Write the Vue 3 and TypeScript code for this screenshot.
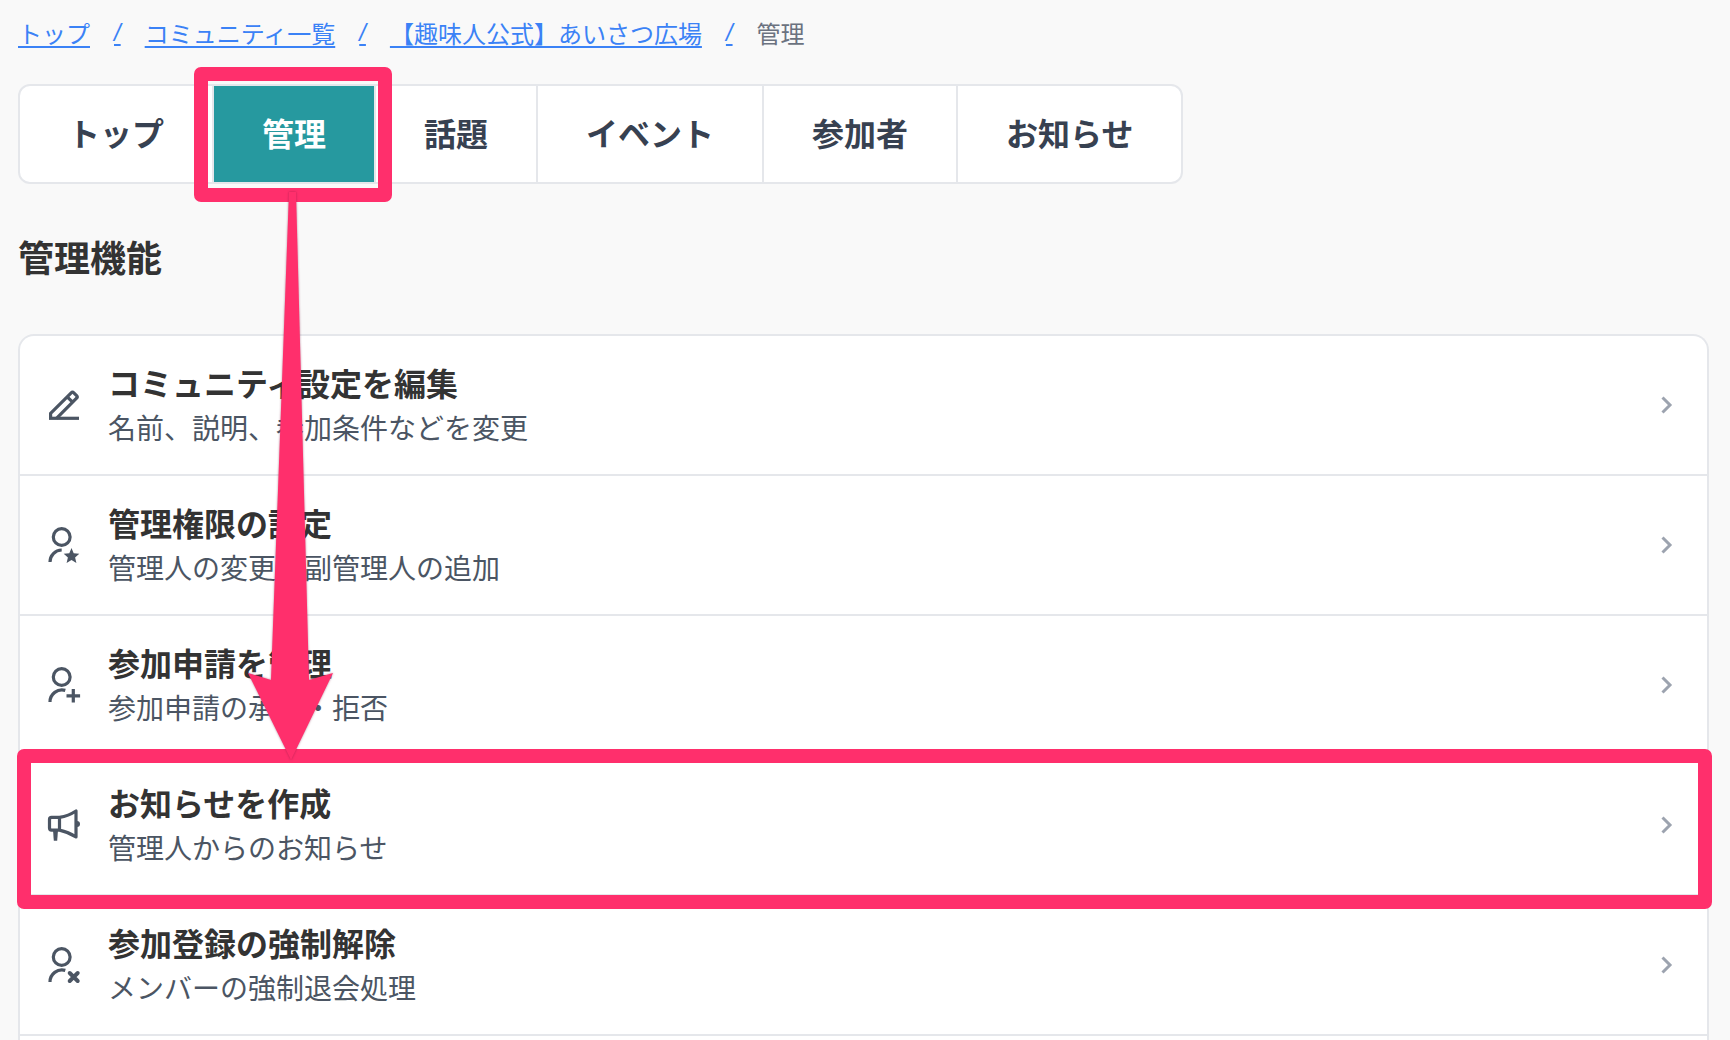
<script setup lang="ts">
interface Crumb {
  label: string
  href?: string
}

interface Tab {
  label: string
  href: string
  active?: boolean
}

type IconName = 'edit' | 'star' | 'add' | 'megaphone' | 'remove'

interface MenuItem {
  title: string
  description: string
  icon: IconName
  highlighted?: boolean
}

const crumbs: Crumb[] = [
  { label: 'トップ', href: '#top' },
  { label: 'コミュニティ一覧', href: '#communities' },
  { label: '【趣味人公式】あいさつ広場', href: '#community' },
  { label: '管理' },
]

const tabs: Tab[] = [
  { label: 'トップ', href: '#top' },
  { label: '管理', href: '#manage', active: true },
  { label: '話題', href: '#topics' },
  { label: 'イベント', href: '#events' },
  { label: '参加者', href: '#members' },
  { label: 'お知らせ', href: '#news' },
]

const items: MenuItem[] = [
  { title: 'コミュニティ設定を編集', description: '名前、説明、参加条件などを変更', icon: 'edit' },
  { title: '管理権限の設定', description: '管理人の変更・副管理人の追加', icon: 'star' },
  { title: '参加申請を管理', description: '参加申請の承認・拒否', icon: 'add' },
  { title: 'お知らせを作成', description: '管理人からのお知らせ', icon: 'megaphone', highlighted: true },
  { title: '参加登録の強制解除', description: 'メンバーの強制退会処理', icon: 'remove' },
]
</script>

<template>
  <div class="page">
    <nav class="crumbs" aria-label="パンくずリスト">
      <template v-for="(crumb, i) in crumbs" :key="crumb.label">
        <span v-if="i > 0" class="slash">/</span>
        <a v-if="crumb.href" class="crumb-link" :href="crumb.href">{{ crumb.label }}</a>
        <span v-else>{{ crumb.label }}</span>
      </template>
    </nav>

    <nav class="tabs">
      <a
        v-for="tab in tabs"
        :key="tab.label"
        class="tab"
        :class="{ active: tab.active }"
        :href="tab.href"
      >
        {{ tab.label }}
        <template v-if="tab.active">
          <span class="frame tab-frame"></span>
          <svg class="arrow" viewBox="0 0 88 576" aria-hidden="true">
            <path d="M43 5h7L63 493l24-7L45 573 2 486l23 7Z" />
          </svg>
        </template>
      </a>
    </nav>

    <h1 class="heading">管理機能</h1>

    <ul class="menu">
      <li v-for="item in items" :key="item.title" class="menu-item">
        <a class="row" href="#manage">
          <svg class="icon" viewBox="0 0 40 40" aria-hidden="true">
            <g v-if="item.icon === 'edit'">
              <path d="M5 33.3h30" />
              <path d="M6.6 33v-4.6L27.2 7.8q1.3-1.3 2.6 0l2.8 2.8q1.3 1.3 0 2.6L12.5 33.3M23.2 11.8l5.4 5.4" />
            </g>
            <g v-else-if="item.icon === 'megaphone'">
              <path d="M15.5 12.4h-8q-2 0-2 2v8.7q0 2 2 2h8ZM15.5 12.4q9-1.5 16.500-6.400v26q-7.500-5-16.500-6.900" stroke-linejoin="round" />
              <path d="M9 25h5l-.8 10.700h-3.400Z" class="solid" />
              <path d="M33 16a3 3 0 0 1 0 6Z" class="solid" />
            </g>
            <g v-else>
              <circle cx="17.7" cy="12" r="8.4" />
              <path v-if="item.icon === 'star'" d="M6 37a12 12 0 0 1 11.700-12" />
              <path v-else d="M6 37A12 12 0 0 1 21.300 25.400" />
              <path
                v-if="item.icon === 'star'"
                class="solid"
                d="m27.500 23 2.200 5.200 5.600.5-4.200 3.700 1.300 5.500-4.900-2.900-4.900 2.900 1.300-5.500-4.200-3.700 5.600-.5Z"
              />
              <path v-else-if="item.icon === 'add'" d="M29.300 24v13.600M22.500 30.800h13.600" />
              <path v-else d="m25.700 28 8 8m0-8-8 8" class="cross" />
            </g>
          </svg>
          <span class="text">
            <strong class="title">{{ item.title }}</strong>
            <span class="description">{{ item.description }}</span>
          </span>
          <svg class="chevron" viewBox="0 0 32 32" aria-hidden="true">
            <path d="m11.500 8.500 7.500 7.500-7.500 7.500" />
          </svg>
        </a>
        <span v-if="item.highlighted" class="frame row-frame"></span>
      </li>
    </ul>
  </div>
</template>

<style>
body {
  margin: 0;
  background: #f9f9f9;
}
</style>

<style scoped>
.page {
  box-sizing: border-box;
  display: flex;
  flex-direction: column;
  min-height: 100vh;
  padding: 16px 21px 0 18px;
  background: #f9f9f9;
  color: #333;
  font-family: "Noto Sans CJK JP", sans-serif;
}

a {
  color: inherit;
  text-decoration: none;
}

.crumbs {
  display: flex;
  gap: 24px;
  margin-bottom: 34px;
  color: #6b7280;
  font-size: 24px;
  line-height: 34px;
}

.crumb-link,
.slash {
  color: #3b82f6;
  text-decoration: underline 2px;
  text-decoration-skip-ink: none;
  text-underline-offset: 3px;
}

.slash {
  font-family: "Liberation Sans", sans-serif;
  font-style: italic;
}

.tabs {
  display: flex;
  align-self: flex-start;
  border: 2px solid #e5e7eb;
  border-radius: 12px;
  background: #fff;
}

.tab {
  position: relative;
  padding: 22px 48px 26px;
  color: #374151;
  font-size: 32px;
  font-weight: 700;
  line-height: 48px;
}

.tab + .tab {
  border-left: 2px solid #e5e7eb;
}

.tab.active {
  background: #26999f;
  color: #fff;
}

.heading {
  margin: 48px 0 54px;
  font-size: 36px;
  line-height: 48px;
}

.menu {
  flex: 1;
  margin: 0;
  padding: 0;
  border: 2px solid #e5e7eb;
  border-bottom: 0;
  border-radius: 16px 16px 0 0;
  background: #fff;
  list-style: none;
}

.menu-item {
  position: relative;
  border-bottom: 2px solid #e5e7eb;
}

.row {
  display: flex;
  align-items: center;
  gap: 24px;
  padding: 24px;
}

.text {
  display: flex;
  flex: 1;
  flex-direction: column;
}

.title {
  font-size: 32px;
  line-height: 44px;
}

.description {
  color: #4b5563;
  font-size: 28px;
  line-height: 46px;
}

.icon {
  width: 40px;
  height: 40px;
  fill: none;
  stroke: #4b5563;
  stroke-width: 3.2;
}

.solid {
  fill: #4b5563;
  stroke: none;
}

.cross {
  stroke-linecap: round;
  stroke-width: 4;
}

.chevron {
  width: 32px;
  height: 32px;
  fill: none;
  stroke: #9ca3af;
  stroke-width: 3;
}

.frame {
  position: absolute;
  z-index: 1;
  border: 14px solid #ff2f6c;
  border-radius: 7px;
  pointer-events: none;
}

.tab-frame {
  inset: -19px -18px -20px -20px;
}

.row-frame {
  inset: -7px -5px -15px -3px;
}

.arrow {
  position: absolute;
  z-index: 2;
  top: 101px;
  left: 32px;
  width: 88px;
  height: 576px;
  fill: #ff2f6c;
  filter: drop-shadow(0 0 1px rgb(120 20 60 / 50%));
  pointer-events: none;
}
</style>
